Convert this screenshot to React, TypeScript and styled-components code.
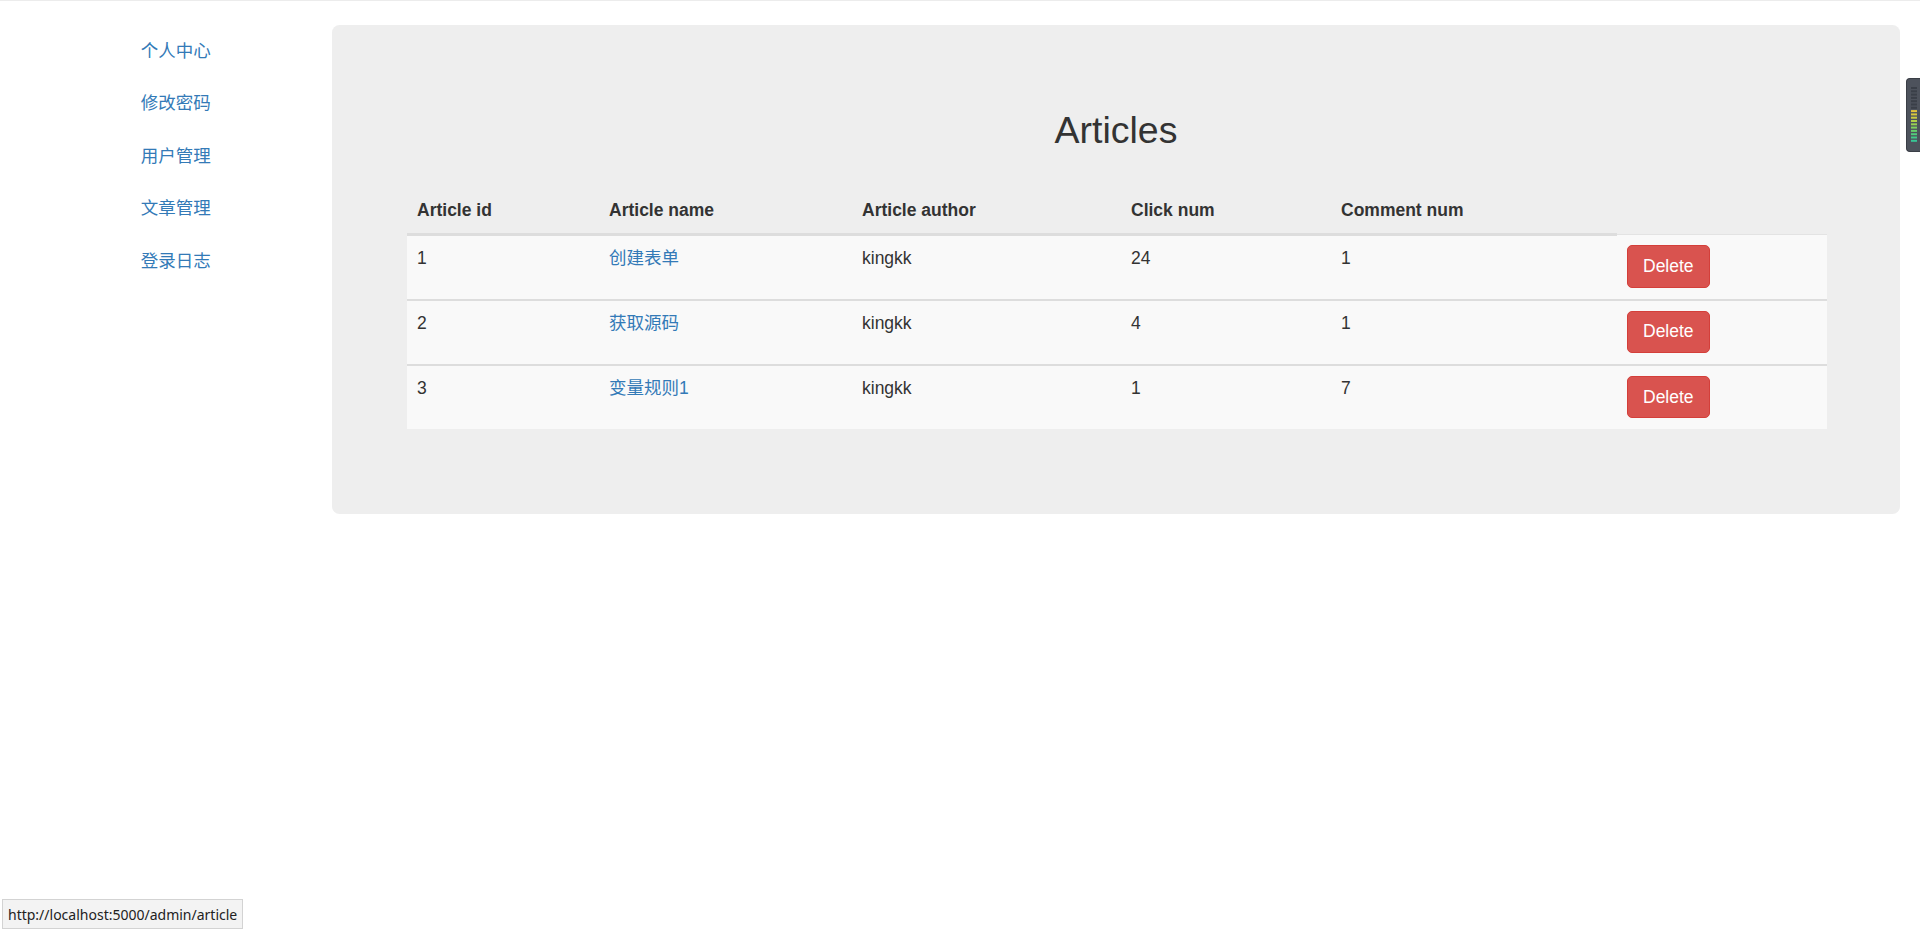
import React from "react";
import styled, { createGlobalStyle } from "styled-components";

const GlobalStyle = createGlobalStyle`
  html, body { margin: 0; padding: 0; }
  body {
    background: #fff;
    border-top: 1px solid #ececec;
    font-family: "Liberation Sans", Arial, "Noto Sans CJK SC", sans-serif;
    font-size: 17.5px;
    line-height: 25px;
    color: #333;
  }
  * { box-sizing: border-box; }
`;

const Page = styled.div`
  display: flex;
  align-items: flex-start;
  padding-top: 24px;
`;

const Sidebar = styled.nav`
  width: 332px;
  flex: none;
  padding-left: 122px;
  padding-top: 1px;
`;

const NavList = styled.ul`
  list-style: none;
  margin: 0;
  padding: 0;
  display: flex;
  flex-direction: column;
  gap: 2.5px;
`;

const NavLink = styled.a`
  display: block;
  padding: 12.5px 18.75px;
  color: #337ab7;
  text-decoration: none;
  font-family: "Liberation Sans", "Noto Sans CJK SC", sans-serif;
  font-size: 17.5px;
  line-height: 25px;
`;

const Jumbotron = styled.main`
  width: 1568px;
  flex: none;
  background: #eeeeee;
  border-radius: 7.5px;
  padding: 60px 75px;
`;

const Title = styled.h2`
  margin: 25px 0 12.5px;
  text-align: center;
  font-size: 37.5px;
  font-weight: 500;
  line-height: 1.1;
  color: #333;
`;

const Table = styled.table`
  width: 100%;
  margin: 37px 0 25px;
  border-collapse: collapse;
  table-layout: fixed;
`;

const HeadCell = styled.th`
  text-align: left;
  font-weight: bold;
  padding: 10px;
  line-height: 25px;
  vertical-align: bottom;
  border-bottom: 3px solid #dddddd;
`;

const Row = styled.tr<{ $first?: boolean }>`
  background: #f9f9f9;
  & > td {
    border-top: ${(p) => (p.$first ? "1px solid #e3e3e3" : "2px solid #dddddd")};
  }
`;

const Cell = styled.td`
  padding: 10px 10px 10.75px;
  line-height: 25px;
  vertical-align: top;
  color: #333;
`;

const ArticleLink = styled.a`
  color: #337ab7;
  text-decoration: none;
  font-family: "Liberation Sans", "Noto Sans CJK SC", sans-serif;
`;

const DeleteButton = styled.button`
  display: inline-block;
  padding: 7.75px 15px;
  font-family: "Liberation Sans", Arial, sans-serif;
  font-size: 17.5px;
  line-height: 25px;
  color: #fff;
  background: #d9534f;
  border: 1px solid #d43f3a;
  border-radius: 5px;
  cursor: pointer;
`;

const StatusTip = styled.div`
  position: fixed;
  left: 2px;
  bottom: 5px;
  height: 30px;
  display: flex;
  align-items: center;
  padding: 0 5px;
  background: #f3f3f3;
  border: 1px solid #d3d3d3;
  font-family: "Noto Sans", "Open Sans", sans-serif;
  font-size: 14px;
  color: #222;
  white-space: nowrap;
`;

const SideWidget = styled.div`
  position: fixed;
  top: 78px;
  right: 0;
  width: 14px;
  height: 74px;
  background: #4d525c;
  border: 1px solid #3a3e46;
  border-right: none;
  border-radius: 4px 0 0 4px;
  display: flex;
  justify-content: center;
  padding-top: 8px;
`;

const cols = [192, 253, 269, 210, 286, 210];

const articles = [
  { id: 1, name: "创建表单", author: "kingkk", clicks: 24, comments: 1 },
  { id: 2, name: "获取源码", author: "kingkk", clicks: 4, comments: 1 },
  { id: 3, name: "变量规则1", author: "kingkk", clicks: 1, comments: 7 },
];

const navItems = ["个人中心", "修改密码", "用户管理", "文章管理", "登录日志"];

const meterColors = [
  "#3a3f48", "#3a3f48", "#3a3f48", "#3a3f48", "#3a3f48", "#3a3f48", "#3a3f48",
  "#e2c43a", "#d8c83c", "#c9cc40", "#b1cf48", "#98d052", "#7fd05e", "#66cf6c",
  "#52cd7a", "#43ca88", "#38c696",
];

function Meter() {
  return (
    <svg width="6" height="58" viewBox="0 0 6 58">
      {meterColors.map((c, i) => (
        <rect key={i} x="0" y={i * 3.3} width="6" height="2" fill={c} />
      ))}
    </svg>
  );
}

export default function App() {
  return (
    <>
      <GlobalStyle />
      <Page>
        <Sidebar>
          <NavList>
            {navItems.map((t) => (
              <li key={t}>
                <NavLink href="#">{t}</NavLink>
              </li>
            ))}
          </NavList>
        </Sidebar>
        <Jumbotron>
          <Title>Articles</Title>
          <Table>
            <colgroup>
              {cols.map((w, i) => (
                <col key={i} style={{ width: w }} />
              ))}
            </colgroup>
            <thead>
              <tr>
                <HeadCell>Article id</HeadCell>
                <HeadCell>Article name</HeadCell>
                <HeadCell>Article author</HeadCell>
                <HeadCell>Click num</HeadCell>
                <HeadCell>Comment num</HeadCell>
              </tr>
            </thead>
            <tbody>
              {articles.map((a, i) => (
                <Row key={a.id} $first={i === 0}>
                  <Cell>{a.id}</Cell>
                  <Cell>
                    <ArticleLink href="#">{a.name}</ArticleLink>
                  </Cell>
                  <Cell>{a.author}</Cell>
                  <Cell>{a.clicks}</Cell>
                  <Cell>{a.comments}</Cell>
                  <Cell>
                    <DeleteButton>Delete</DeleteButton>
                  </Cell>
                </Row>
              ))}
            </tbody>
          </Table>
        </Jumbotron>
      </Page>
      <SideWidget>
        <Meter />
      </SideWidget>
      <StatusTip>http://localhost:5000/admin/article</StatusTip>
    </>
  );
}
